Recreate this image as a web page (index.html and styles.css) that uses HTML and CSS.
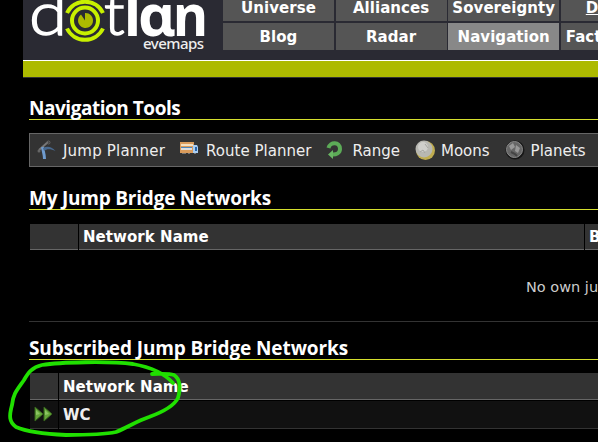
FILE: index.html
```
<!DOCTYPE html>
<html lang="en">
<head>
<meta charset="utf-8">
<title>DOTLAN EveMaps - Navigation</title>
<link rel="stylesheet" href="styles.css">
</head>
<body>
<div class="page">
  <header class="header">
    <svg class="logo" width="200" height="60" viewBox="0 0 200 60">
      <text class="thin" x="6" y="35" textLength="38" lengthAdjust="spacingAndGlyphs">d</text>
      <g class="eye">
        <circle cx="62" cy="20.500" r="13"/>
        <path d="M44 28.500A20 20 0 0 0 80 28.500M44 13A20 20 0 0 1 80 13"/>
        <path class="pupil" d="M62 20.500L58 14.500A7.500 7.500 0 1 0 62 13Z"/>
      </g>
      <text class="thin" x="81" y="35">t</text>
      <text class="heavy" x="101" y="36">l</text>
      <text class="heavy" x="115" y="36" textLength="37" lengthAdjust="spacingAndGlyphs">ɑ</text>
      <text class="heavy" x="150" y="36" textLength="35" lengthAdjust="spacingAndGlyphs">n</text>
      <text class="sub" x="120" y="49" textLength="61">evemaps</text>
    </svg>
    <nav class="menu">
      <a>Universe</a><a>Alliances</a><a>Sovereignty</a><a class="under">D</a>
      <a>Blog</a><a>Radar</a><a class="active">Navigation</a><a class="cut">Factions</a>
    </nav>
  </header>
  <div class="stripe"></div>
  <main class="content">
    <h2 class="h1st">Navigation Tools</h2>
    <div class="tools">
      <a><svg width="20" height="20" viewBox="0 0 20 20"><path d="M2 10L11 2" stroke="#777" stroke-width="2"/><circle cx="11.500" cy="2.500" r="1.500" fill="none" stroke="#666"/><circle cx="2" cy="11" r="1.500" fill="#666"/><path d="M7.500 19C7.500 14 6 11 5.500 7" fill="none" stroke="#6f9bcd" stroke-width="3"/><path d="M6 8C10 6 14 6 18.500 11C14 9 10 8.500 7 11Z" fill="#48698f"/></svg><span class="t1">Jump Planner</span></a>
      <a><svg width="20" height="20" viewBox="0 0 20 20"><path d="M0 2H14V13H0Z" fill="#d99b5b"/><path d="M1 4H13V6H1Z" fill="#f4dfc0"/><path d="M1 7H12V8H1Z" fill="#4d87bd"/><path d="M1 8H12V10H1Z" fill="#ddd"/><path d="M13 5H17L18 7V13H13Z" fill="#a9cdf2"/><path d="M15 7H17V11H15Z" fill="#2765ac"/><path d="M2 13.500H6M8 13.500H10M14 13.500H16" stroke="#777"/></svg><span class="t2">Route Planner</span></a>
      <a><svg width="20" height="20" viewBox="0 0 20 20"><path d="M2.500 8C4 1.500 14 1.500 14 9C14 13 10 14.500 7 14.500" fill="none" stroke="#5cab57" stroke-width="4"/><path d="M7 10V19L2 14.500Z" fill="#69b763"/></svg><span>Range</span></a>
      <a><svg width="20" height="20" viewBox="0 0 20 20"><circle cx="10.500" cy="10.500" r="9.500" fill="#c0ad50"/><circle cx="9" cy="9" r="8.500" fill="#b8b8b2"/><circle cx="8" cy="7" r="5" fill="#cfcfcb"/><path d="M5 12L8 10L10 13M10 4L13 8" stroke="#a5a5a0" fill="none"/></svg><span>Moons</span></a>
      <a><svg width="20" height="20" viewBox="0 0 20 20"><circle cx="10" cy="10" r="9.500" fill="#171717"/><circle cx="9.500" cy="9.500" r="8" fill="#666" stroke="#8a8a8a"/><path d="M4 6L8 3L10 7L6 10ZM11 5L15 8L13 13L10 11Z" fill="#999"/><path d="M6 12L10 14L12 16" stroke="#444" stroke-width="2" fill="none"/></svg><span>Planets</span></a>
    </div>
    <h2 class="h2nd">My Jump Bridge Networks</h2>
    <div class="own-head"><b></b><b>Network Name</b><b>Bridges</b></div>
    <div class="empty">No own jump bridge networks</div>
    <h2 class="h3rd">Subscribed Jump Bridge Networks</h2>
    <div class="sub-head"><b></b><b>Network Name</b></div>
    <div class="sub-row"><b><svg width="20" height="18" viewBox="0 0 20 18"><path d="M1 2L9 9L1 16ZM10 2L18 9L10 16Z" fill="#65a63a" stroke="#36641c"/><path d="M2 5L6 9L2 10ZM11 5L15 9L11 10Z" fill="#8cc563"/></svg></b><b>WC</b></div>
  </main>
  <svg class="scribble" width="598" height="442" viewBox="0 0 598 442"><path d="M173 383C164 373 150 367 133 364C110 361 60 362 42 365C32 367 28 373 24 380C17 390 13 394 12 405C9 416 9 422 16 427C25 431 44 434 66 435C90 435 107 434 116 432C128 427 137 421 149 417C160 413 174 406 178 398C181 387 180 379 174 375C168 373 160 374 152 374"/></svg>
</div>
</body>
</html>
```
FILE: styles.css
```
body { margin: 0; background: #000; color: #fff; font: 15px "DejaVu Sans", Verdana, sans-serif; }
.page { position: relative; width: 598px; height: 442px; overflow: hidden; }
.header { display: flex; margin-left: 23px; height: 60px; background: #2a2a33; overflow: hidden; }
.logo { flex: none; }
.thin { font: 300 60px Lato, sans-serif; fill: #fff; stroke: #fff; stroke-width: 1.4; }
.heavy { font: 700 57px "Noto Sans", "DejaVu Sans", sans-serif; fill: #fff; }
.sub { font: 500 15px "Noto Sans", sans-serif; fill: #eee; }
.eye { fill: none; stroke: #c8f000; stroke-width: 4; }
.eye .pupil { fill: #adba00; stroke: none; }
.menu { display: grid; flex: none; grid-template-columns: repeat(4, 111px); grid-auto-rows: 27px; column-gap: 1.6px; row-gap: 2px; margin-top: -6px; }
.menu a { background: #555; text-align: center; font-weight: bold; line-height: 29px; white-space: nowrap; letter-spacing: 0.05px; }
.menu .active { background: #888; }
.menu .under { text-align: left; padding-left: 25px; text-decoration: underline; }
.menu .cut { text-align: left; padding-left: 5px; }
.stripe { margin-left: 23px; height: 16px; background: #adba00; border-top: 1px solid #fff; border-bottom: 1px solid #333; }
.content { margin-left: 29px; }
h2 { margin: 0; height: 25px; border-bottom: 1px solid #d5df2d; font: 700 19px/29px "Open Sans", sans-serif; white-space: nowrap; }
.h1st { margin-top: 16px; letter-spacing: -0.47px; }
.h2nd { margin-top: 17px; letter-spacing: -0.22px; }
.h3rd { margin-top: 12px; letter-spacing: -0.1px; }
.tools { display: flex; align-items: center; gap: 15px; margin-top: 13px; height: 32px; padding-left: 7px; background: #333; border: 1px solid #666; border-right: 0; color: #eee; }
.tools a { display: flex; align-items: center; gap: 6px; flex: none; }
.tools span { padding-top: 2px; }
.tools .t1 { letter-spacing: 0.2px; }
.tools .t2 { letter-spacing: 0.02px; }
.own-head, .sub-head, .sub-row { display: grid; gap: 1px; margin-left: 1px; white-space: nowrap; }
.own-head { grid-template-columns: 48px 505px 60px; margin-top: 14px; }
.own-head b, .sub-head b { background: #333; border-bottom: 1px solid #666; text-indent: 4px; letter-spacing: 0.05px; }
.own-head b { height: 25px; line-height: 27px; }
.empty { height: 71px; line-height: 75px; border-bottom: 1px solid #333; padding-left: 497px; color: #ccc; font-size: 14.500px; white-space: nowrap; overflow: hidden; }
.sub-head, .sub-row { grid-template-columns: 28px 540px; }
.sub-head { margin-top: 13px; }
.sub-head b { height: 26px; line-height: 29px; }
.sub-row { margin-top: 1px; }
.sub-row b { height: 27px; line-height: 29px; background: #111; border-bottom: 1px solid #333; text-indent: 4px; color: #eee; }
.sub-row svg { display: block; margin: 4px 0 0 4px; }
.scribble { position: absolute; left: 0; top: 0; fill: none; stroke: #20e000; stroke-width: 3.800; stroke-linecap: round; stroke-linejoin: round; }
```
